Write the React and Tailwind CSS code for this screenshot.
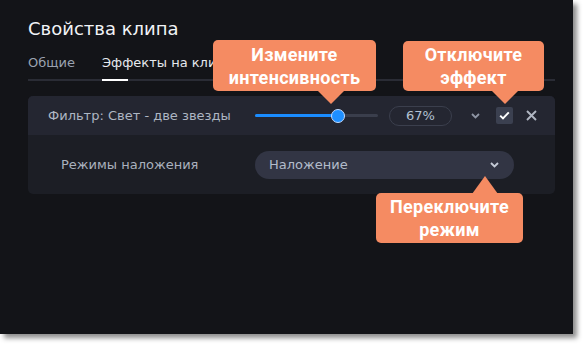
export default function App() {
  const ui = { fontFamily: '"DejaVu Sans", Verdana, sans-serif' }
  const bold = { fontFamily: 'Roboto, "Liberation Sans", Arial, sans-serif' }

  return (
    <div className="w-[588px] h-[349px] bg-white">
      <div
        className="relative w-[573px] h-[334px] bg-[#131418] pt-[18px] pl-[28px] pr-[18px] shadow-[4px_4px_5px_rgba(0,0,0,0.45)]"
        style={ui}
      >
        <h1 className="text-[18px] leading-[22px] text-[#f1f3f6]">Свойства клипа</h1>

        <div className="mt-[15px] flex text-[13px] leading-[16px]">
          <span className="w-[74px] text-[#9aa2b0]">Общие</span>
          <span className="text-[#e6e9ee] whitespace-nowrap">Эффекты на клип</span>
        </div>
        <div className="mt-[8px] h-[2px] bg-[#2a2c35]">
          <div className="ml-[74px] w-[26px] h-[2px] bg-white" />
        </div>

        <div className="mt-[15px] rounded-[5px] overflow-hidden bg-[#1c1e25]">
          <div className="h-[39px] bg-[#242631] flex items-center pl-[20px]">
            <span className="w-[207px] text-[13px] text-[#aeb6c3] whitespace-nowrap">
              Фильтр: Свет - две звезды
            </span>
            <div className="relative w-[123px] h-[3px] rounded-full bg-[#3a3e4c]">
              <div className="w-[83px] h-[3px] rounded-full bg-[#1a8cff]" />
              <div className="absolute left-[76px] top-[-5.5px] w-[14px] h-[14px] rounded-full bg-[#1e8fff] border-[1.5px] border-[#c3dcff]" />
            </div>
            <div className="ml-[11px] w-[63px] h-[20px] rounded-full border-[1.5px] border-[#3b3f4d] flex items-center justify-center text-[13px] text-[#b3c1d3]">
              67%
            </div>
            <svg className="ml-[19px]" width="9" height="6" viewBox="0 0 9 6">
              <path d="M1 1l3.5 3.5L8 1" fill="none" stroke="#8e95a4" strokeWidth="1.8" />
            </svg>
            <div className="ml-[16px] w-[17px] h-[17px] rounded-[2px] bg-[#3b4050] flex items-center justify-center">
              <svg width="11" height="9" viewBox="0 0 11 9">
                <path d="M1.2 4.6l2.8 2.8L9.8 1.4" fill="none" stroke="#ffffff" strokeWidth="2" />
              </svg>
            </div>
            <svg className="ml-[13px]" width="11" height="11" viewBox="0 0 11 11">
              <path d="M1 1l9 9M10 1l-9 9" stroke="#b0b6c2" strokeWidth="1.9" />
            </svg>
          </div>
          <div className="h-[59px] flex items-center pl-[33px]">
            <span className="w-[194px] text-[13px] text-[#aab1be]">Режимы наложения</span>
            <div className="w-[259px] h-[28px] rounded-full bg-[#323544] flex items-center justify-between pl-[14px] pr-[15px] text-[13px] text-[#b3bccb]">
              <span>Наложение</span>
              <svg width="9" height="6" viewBox="0 0 9 6">
                <path d="M1 1l3.5 3.5L8 1" fill="none" stroke="#c4cad6" strokeWidth="1.9" />
              </svg>
            </div>
          </div>
        </div>

        <div
          className="absolute left-[213px] top-[40px] w-[163px] h-[51px] rounded-[5px] bg-[#f58b62] flex items-center justify-center text-center text-white font-bold text-[18px] leading-[23px] tracking-[0.3px]"
          style={bold}
        >
          Измените<br />интенсивность
          <div className="absolute left-[104px] top-[50px] w-0 h-0 border-l-[14px] border-r-[14px] border-t-[14px] border-l-transparent border-r-transparent border-t-[#f58b62]" />
        </div>

        <div
          className="absolute left-[403px] top-[41px] w-[141px] h-[50px] rounded-[5px] bg-[#f58b62] flex items-center justify-center text-center text-white font-bold text-[18px] leading-[23px] tracking-[0.3px]"
          style={bold}
        >
          Отключите<br />эффект
          <div className="absolute left-[88px] top-[49px] w-0 h-0 border-l-[14px] border-r-[14px] border-t-[14px] border-l-transparent border-r-transparent border-t-[#f58b62]" />
        </div>

        <div
          className="absolute left-[376px] top-[193px] w-[147px] h-[50px] rounded-[5px] bg-[#f58b62] flex items-center justify-center text-center text-white font-bold text-[18px] leading-[23px] tracking-[0.3px]"
          style={bold}
        >
          Переключите<br />режим
          <div className="absolute left-[96px] top-[-17px] w-0 h-0 border-l-[13px] border-r-[13px] border-b-[18px] border-l-transparent border-r-transparent border-b-[#f58b62]" />
        </div>
      </div>
    </div>
  )
}
